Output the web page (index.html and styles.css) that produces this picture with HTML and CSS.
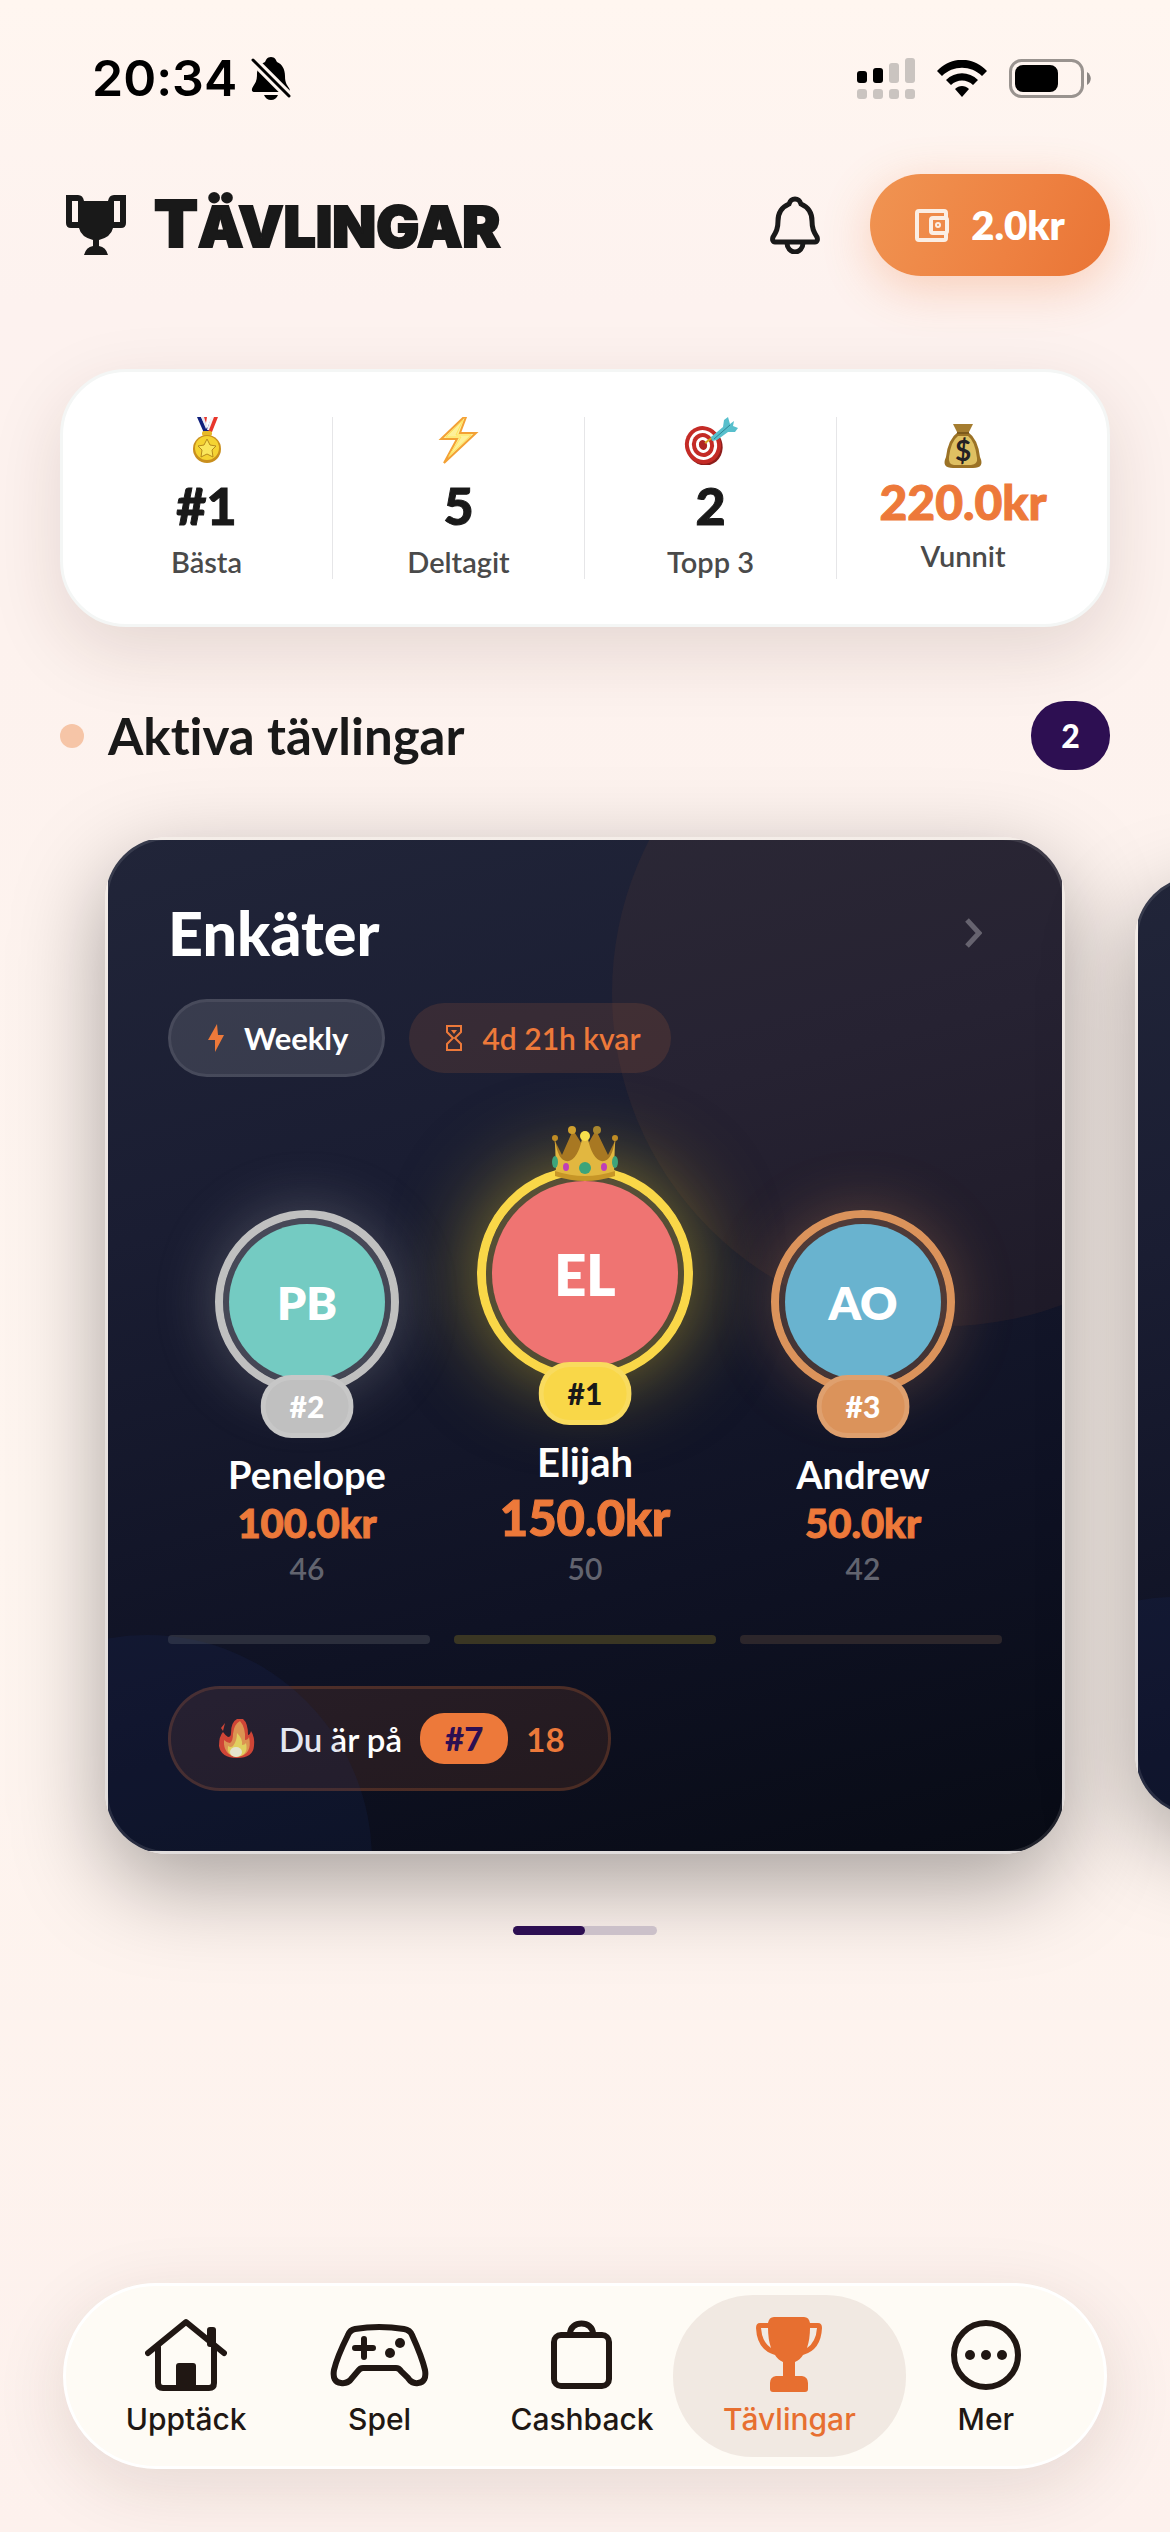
FILE: index.html
```html
<!DOCTYPE html>
<html lang="sv">
<head>
    <meta charset="utf-8">
    <meta name="viewport" content="width=device-width">
    <title>Tävlingar</title>
    <link rel="stylesheet" href="styles.css">
</head>
<body>
    <div class="statusbar">
        <div class="status-left">
            <span class="clock">20:34</span>
            <svg width="40" height="43" viewBox="0 0 40 43">
                <path d="M20 0C24 0 25 3 26 5C31 7 34 12 34 19C34 26 36 28 38 31C40 35 38 35 36 35H4C-1 35 1 31 3 28C6 24 6 20 6 16C7 9 10 7 14 5C15 3 16 0 20 0Z"/>
                <path d="M13 38H27C26 41 23 43 20 43S14 41 13 38Z"/>
                <path class="slash-gap" d="M2 3L38 39"/>
                <path class="slash" d="M2 3L38 39"/>
            </svg>
        </div>
        <div class="status-right">
            <svg width="58" height="41" viewBox="0 0 58 41">
                <rect x="0" y="13" width="10" height="12" rx="3"/>
                <rect x="16" y="10" width="10" height="15" rx="3"/>
                <g class="dim">
                    <rect x="32" y="5" width="10" height="20" rx="3"/>
                    <rect x="48" y="0" width="10" height="25" rx="3"/>
                    <rect x="0" y="31" width="10" height="10" rx="3"/>
                    <rect x="16" y="31" width="10" height="10" rx="3"/>
                    <rect x="32" y="31" width="10" height="10" rx="3"/>
                    <rect x="48" y="31" width="10" height="10" rx="3"/>
                </g>
            </svg>
            <svg width="50" height="37" viewBox="0 0 50 37">
                <path d="M0 11C14 -4 36 -4 50 11L45 16C34 5 16 5 5 16Z"/>
                <path d="M9 20C18 11 32 11 41 20L36 25C30 19 20 19 14 25Z"/>
                <path d="M18 29C22 25 28 25 32 29L25 37Z"/>
            </svg>
            <svg width="82" height="39" viewBox="0 0 82 39">
                <rect class="battery-shell" x="1.5" y="1.5" width="72" height="36" rx="11"/>
                <rect x="6" y="6" width="43" height="27" rx="8"/>
                <path class="battery-tip" d="M78 13C83 16 83 23 78 26Z"/>
            </svg>
        </div>
    </div>

    <header class="header">
        <svg class="header-trophy" width="60" height="60" viewBox="0 0 60 60">
            <path fill-rule="evenodd" d="M0 0H12Q17 0 18 6H42Q43 0 48 0H60V28Q60 33 55 33H47Q45 42 33 45V51Q40 52 42 60H18Q20 52 27 51V45Q15 42 13 33H5Q0 33 0 28ZM6 6V27H12V6ZM48 6V27H54V6Z"/>
        </svg>
        <h1>TÄVLINGAR</h1>
        <button class="bell" type="button" aria-label="Notiser">
            <svg width="50" height="58" viewBox="0 0 50 58">
                <path d="M25 3C29 3 30 5 31 8C38 11 42 16 42 25C42 33 44 36 47 41C48 44 47 46 45 46H5C3 46 2 44 3 41C6 36 8 33 8 25C8 16 12 11 19 8C20 5 21 3 25 3Z"/>
                <path d="M17 47A8 9 0 0 0 33 47"/>
            </svg>
        </button>
        <button class="wallet" type="button">
            <svg width="34" height="33" viewBox="0 0 34 33">
                <path d="M31 8V4Q31 2 29 2H4Q2 2 2 4V29Q2 31 4 31H29Q31 31 31 29V24"/>
                <rect x="16" y="9" width="16" height="15" rx="2"/>
                <circle cx="23" cy="16" r="1"/>
            </svg>
            2.0kr
        </button>
    </header>

    <main>
        <section class="stats">
            <div class="stat">
                <svg class="emoji" width="50" height="48" viewBox="0 0 50 48">
                    <path fill="#10207c" d="M15 0H19L25 12L29 2V0H33L28 16H22Z"/>
                    <path fill="#e8e8f0" d="M19 0H22L25 8L24 12Z"/>
                    <path fill="#e8362c" d="M22 0H25L24 6ZM31 0H36L30 15H26Z"/>
                    <path fill="#f5f5f8" d="M29 0H32L27 13L25 13Z"/>
                    <rect x="20" y="14" width="10" height="5" rx="2" fill="#e7b928"/>
                    <circle cx="25" cy="32" r="14" fill="#c98f1d"/>
                    <circle cx="25" cy="31" r="12" fill="#f5d332"/>
                    <path fill="#fae65c" stroke="#b78a1c" d="M25 22L28 28L34 29L30 33L31 40L25 37L19 40L20 33L16 29L22 28Z"/>
                </svg>
                <span class="stat-value">#1</span>
                <span class="stat-label">Bästa</span>
            </div>
            <div class="stat">
                <svg class="emoji" width="50" height="48" viewBox="0 0 50 48">
                    <path fill="#fdf09a" stroke="#f3a135" stroke-width="2" d="M30 0L7 22H23L10 46L42 16H26L32 0Z"/>
                    <path fill="none" stroke="#ffe45c" d="M29 3L12 20H27L15 39L37 18H22Z"/>
                </svg>
                <span class="stat-value">5</span>
                <span class="stat-label">Deltagit</span>
            </div>
            <div class="stat">
                <svg class="emoji" width="54" height="48" viewBox="0 0 54 48">
                    <g transform="rotate(-18 19 28)">
                        <ellipse cx="20" cy="30" rx="18" ry="19" fill="#8d1d1b"/>
                        <ellipse cx="19" cy="28" rx="18" ry="19" fill="#c42b26"/>
                        <ellipse cx="19" cy="28" rx="14" ry="15" fill="#fff"/>
                        <ellipse cx="19" cy="28" rx="11" ry="12" fill="#c42b26"/>
                        <ellipse cx="19" cy="28" rx="7" ry="8" fill="#fff"/>
                        <ellipse cx="19" cy="28" rx="4" ry="5" fill="#b02522"/>
                    </g>
                    <path stroke="#d8a520" stroke-width="2" d="M21 26L29 20"/>
                    <path fill="#58bfcc" d="M27 20L39 10L40 3L44 0L46 7L50 4L49 9L54 11L51 15L44 15L33 23L28 24Z"/>
                    <path stroke="#2d8594" d="M30 22L46 8"/>
                </svg>
                <span class="stat-value">2</span>
                <span class="stat-label">Topp 3</span>
            </div>
            <div class="stat stat-won">
                <svg class="emoji" width="50" height="46" viewBox="0 2 50 46">
                    <path fill="#a57d30" d="M15 3H35L30 13H20Z"/>
                    <path fill="#9b7226" d="M20 11H30Q40 18 42 36Q47 47 35 47H15Q3 47 8 36Q10 18 20 11Z"/>
                    <path fill="#dfc062" d="M20 15H30Q37 20 39 37Q40 43 33 44H16Q10 43 11 36Q13 20 20 15Z"/>
                    <path stroke="#7d5a1c" stroke-width="2" d="M19 12H31"/>
                    <text x="25" y="40" text-anchor="middle" font-size="28" font-weight="700" fill="#242124">$</text>
                </svg>
                <span class="stat-value">220.0kr</span>
                <span class="stat-label">Vunnit</span>
            </div>
        </section>

        <div class="section-head">
            <span class="dot"></span>
            <h2>Aktiva tävlingar</h2>
            <span class="count">2</span>
        </div>

        <section class="carousel">
            <article class="card">
                <div class="card-body">
                    <div class="card-top">
                        <h3>Enkäter</h3>
                        <button class="chevron" type="button" aria-label="Öppna">
                            <svg width="17" height="30" viewBox="0 0 17 30"><path d="M2 2L14 15L2 28"/></svg>
                        </button>
                    </div>
                    <div class="tags">
                        <span class="tag tag-type">
                            <svg width="16" height="28" viewBox="0 0 16 28"><path fill="#ed793a" d="M9 0L0 16H7V28L16 11H10Z"/></svg>
                            Weekly
                        </span>
                        <span class="tag tag-time">
                            <svg width="16" height="26" viewBox="0 0 16 26">
                                <path fill="none" stroke="#ed793a" stroke-width="2" d="M1 1H15V7L9 13L15 19V25H1V19L7 13L1 7Z"/>
                                <path fill="#ed793a" d="M5 5H11L8 9Z"/>
                            </svg>
                            4d 21h kvar
                        </span>
                    </div>
                    <div class="podium">
                        <div class="place silver">
                            <div class="ring"><div class="avatar">PB</div><span class="rank">#2</span></div>
                            <span class="name">Penelope</span>
                            <span class="amount">100.0kr</span>
                            <span class="score">46</span>
                        </div>
                        <div class="place gold">
                            <div class="ring">
                                <svg class="crown" width="66" height="56" viewBox="0 0 66 56">
                                    <path fill="#a87822" d="M2 14L8 48H58L64 14L56 30L44 5L33 24L21 5L10 30Z"/>
                                    <circle cx="20" cy="5" r="4" fill="#d0a02e"/>
                                    <circle cx="45" cy="5" r="4" fill="#a8862e"/>
                                    <circle cx="3" cy="13" r="3" fill="#c08c24"/>
                                    <circle cx="63" cy="13" r="3" fill="#c08c24"/>
                                    <path fill="#e2b740" d="M3 14Q6 38 17 36Q26 33 30 14H36Q40 33 49 36Q60 38 63 14L62 50Q33 60 4 50Z"/>
                                    <path fill="#c79627" d="M3 46Q33 56 63 46V51Q33 61 3 51Z"/>
                                    <circle cx="33" cy="11" r="5" fill="#f7df4c"/>
                                    <ellipse cx="33" cy="43" rx="6" ry="6" fill="#3da47a"/>
                                    <ellipse cx="14" cy="42" rx="3" ry="4" fill="#bf3fb5"/>
                                    <ellipse cx="52" cy="42" rx="3" ry="4" fill="#bf3fb5"/>
                                    <ellipse cx="3" cy="37" rx="3" ry="6" fill="#3da47a"/>
                                    <ellipse cx="63" cy="37" rx="3" ry="6" fill="#3da47a"/>
                                </svg>
                                <div class="avatar">EL</div><span class="rank">#1</span>
                            </div>
                            <span class="name">Elijah</span>
                            <span class="amount">150.0kr</span>
                            <span class="score">50</span>
                        </div>
                        <div class="place bronze">
                            <div class="ring"><div class="avatar">AO</div><span class="rank">#3</span></div>
                            <span class="name">Andrew</span>
                            <span class="amount">50.0kr</span>
                            <span class="score">42</span>
                        </div>
                    </div>
                    <div class="bars">
                        <span class="bar bar-silver"></span>
                        <span class="bar bar-gold"></span>
                        <span class="bar bar-bronze"></span>
                    </div>
                    <div class="you">
                        <svg width="36" height="40" viewBox="0 0 36 40">
                            <path fill="#e8472c" d="M12 14Q12 3 18 0H24Q29 4 29 16Q31 16 32 12Q36 18 35 27Q34 39 18 39Q2 39 0 27Q0 17 4 13Q6 16 9 18Q12 18 12 14ZM2 9L6 4L4 12Z"/>
                            <path fill="#f6a04c" d="M14 15Q15 5 21 2Q27 9 26 21Q29 21 30 18Q34 36 18 38Q4 36 5 21Q8 24 11 24Q14 22 14 15Z"/>
                            <path fill="#fbe45a" d="M18 14Q24 20 23 26Q26 26 27 24Q30 37 17 38Q7 36 9 27Q12 29 14 27Q18 22 18 14Z"/>
                            <ellipse cx="17" cy="33" rx="6" ry="5" fill="#fffbd8"/>
                        </svg>
                        <span class="you-text">Du är på</span>
                        <span class="you-rank">#7</span>
                        <span class="you-score">18</span>
                    </div>
                </div>
            </article>
            <article class="card card-next" aria-hidden="true">
                <div class="card-body"></div>
            </article>
        </section>

        <div class="pager"><span class="pager-thumb"></span></div>
    </main>

    <nav class="tabbar">
        <a href="#upptack" class="tab">
            <svg width="82" height="75" viewBox="0 0 82 75">
                <path d="M3 36L41 5L79 36" stroke-linejoin="round"/>
                <path d="M13 30V66Q13 71 18 71H64Q69 71 69 66V30"/>
                <rect class="solid" x="31" y="46" width="20" height="25" rx="3"/>
                <rect class="solid" x="62" y="10" width="9" height="20" rx="3"/>
            </svg>
            Upptäck
        </a>
        <a href="#spel" class="tab">
            <svg width="99" height="75" viewBox="0 -7 99 75">
                <path d="M18 11Q20 6 25 5Q49 1 74 5Q80 6 82 11Q92 33 95 46Q97 58 88 59Q82 60 78 54L71 47Q69 44 66 44H33Q30 44 28 47L22 54Q18 60 11 59Q2 58 4 46Q7 33 18 11Z"/>
                <path d="M25 24H43M34 15V33"/>
                <circle class="solid" cx="70" cy="19" r="5"/>
                <circle class="solid" cx="60" cy="29" r="5"/>
            </svg>
            Spel
        </a>
        <a href="#cashback" class="tab">
            <svg width="61" height="75" viewBox="0 -3 61 75">
                <rect x="3" y="15" width="55" height="51" rx="7"/>
                <path d="M19 14C19 0 42 0 42 14"/>
            </svg>
            Cashback
        </a>
        <a href="#tavlingar" class="tab active">
            <svg width="66" height="75" viewBox="0 0 66 75">
                <path class="solid" fill-rule="evenodd" d="M18 0H48Q53 0 54 6H62Q66 6 66 11Q65 33 47 38Q44 43 39 45V59H46Q52 60 52 66V72Q52 75 49 75H17Q14 75 14 72V66Q14 60 20 59H27V45Q22 43 19 38Q1 33 0 11Q0 6 4 6H12Q13 0 18 0ZM5 11Q6 25 15 31Q12 22 12 11ZM54 11Q54 22 51 31Q60 25 61 11Z"/>
            </svg>
            Tävlingar
        </a>
        <a href="#mer" class="tab">
            <svg width="70" height="75" viewBox="0 -3 70 75">
                <circle cx="35" cy="35" r="32"/>
                <circle class="solid" cx="19" cy="35" r="5"/>
                <circle class="solid" cx="35" cy="35" r="5"/>
                <circle class="solid" cx="51" cy="35" r="5"/>
            </svg>
            Mer
        </a>
    </nav>
</body>
</html>
```

FILE: styles.css
```css
* {
    box-sizing: border-box;
}
body {
    margin: 0;
    min-height: 100vh;
    display: flex;
    flex-direction: column;
    background: linear-gradient(#fff6f0, #fdf2ef 12%, #fdf2ee 25%, #fef5ef 60%, #fdf1ed);
    color: #191919;
    font-family: Lato, "Open Sans", sans-serif;
    font-variant-ligatures: none;
}
h1, h2, h3 {
    margin: 0;
}
button {
    border: none;
    background: none;
    padding: 0;
    font-family: inherit;
    cursor: pointer;
}
svg {
    display: block;
    flex: none;
}

/* status bar */
.statusbar {
    display: flex;
    justify-content: space-between;
    align-items: center;
    height: 156px;
    padding: 0 79px 0 92px;
    color: #000;
}
.status-left {
    display: flex;
    align-items: center;
    gap: 14px;
}
.status-right {
    display: flex;
    align-items: center;
    gap: 22px;
}
.clock {
    font-family: Inter, sans-serif;
    font-size: 50px;
    font-weight: 600;
}
.slash-gap {
    stroke: #fef5ef;
    stroke-width: 9px;
}
.slash {
    stroke: #000;
    stroke-width: 3px;
    stroke-linecap: round;
}
.dim {
    fill: #cac4c0;
}
.battery-shell {
    fill: none;
    stroke: #99938f;
    stroke-width: 3px;
}
.battery-tip {
    fill: #8a8582;
}

/* header */
.header {
    display: flex;
    align-items: center;
    margin: 18px 60px 0;
    height: 102px;
}
.header-trophy {
    margin-left: 6px;
    fill: #191919;
}
h1 {
    margin-left: 28px;
    font-family: Inter, sans-serif;
    font-size: 57px;
    font-weight: 900;
    line-height: 66px;
    -webkit-text-stroke: 2px #191919;
}
h1::first-letter {
    font-size: 64px;
}
.bell {
    margin-left: auto;
    margin-right: 50px;
}
.bell svg {
    fill: none;
    stroke: #191919;
    stroke-width: 5px;
}
.wallet {
    display: flex;
    align-items: center;
    justify-content: center;
    gap: 22px;
    width: 240px;
    height: 102px;
    border-radius: 51px;
    background: linear-gradient(115deg, #f09452, #ee8141 60%, #e97435);
    box-shadow: 0 12px 48px rgba(237, 121, 58, 0.3);
    color: #fff;
    font-size: 40px;
    font-weight: 800;
}
.wallet svg {
    fill: none;
    stroke: #fbeee4;
    stroke-width: 4px;
}

/* stats */
.stats {
    display: grid;
    grid-template-columns: repeat(4, 1fr);
    align-items: center;
    margin: 93px 60px 0;
    padding: 45px 18px;
    border: 3px solid #f4f6f5;
    border-radius: 66px;
    background: #fff;
    box-shadow: 0 24px 72px rgba(60, 30, 20, 0.13);
}
.stat {
    display: flex;
    flex-direction: column;
    align-items: center;
    height: 162px;
    border-right: 1px solid #e6e6e8;
}
.stat-value {
    margin-top: 10px;
    font-size: 52px;
    font-weight: 900;
    line-height: 60px;
    -webkit-text-stroke: 1px;
}
.stat-label {
    margin-top: 10px;
    color: #4a4a4a;
    font-size: 29px;
    font-weight: 600;
    line-height: 34px;
}
.stat-won {
    height: 150px;
    border-right: none;
}
.stat-won .stat-value {
    margin-top: 6px;
    color: #ed793a;
    font-size: 48px;
    line-height: 54px;
}

/* section heading */
.section-head {
    display: flex;
    align-items: center;
    height: 69px;
    margin: 74px 60px 67px;
}
.dot {
    width: 24px;
    height: 24px;
    margin-right: 24px;
    border-radius: 50%;
    background: #f6c5a7;
}
h2 {
    font-size: 51px;
    font-weight: 700;
}
.count {
    margin-left: auto;
    width: 79px;
    border-radius: 34px;
    background: #2d0f52;
    color: #fff;
    font-size: 32px;
    font-weight: 900;
    line-height: 69px;
    text-align: center;
}

/* competition cards */
.carousel {
    display: flex;
    align-items: center;
    gap: 70px;
    padding: 0 105px;
    overflow-x: clip;
}
.card {
    position: relative;
    flex: 0 0 100%;
    padding: 3px;
    border-radius: 63px;
    overflow: hidden;
    background: linear-gradient(#f3ebe6, #e4ddda 60%, #dedad9);
    box-shadow: 0 30px 90px rgba(0, 0, 0, 0.34);
}
.card::after {
    content: "";
    position: absolute;
    inset: 0;
    border: 3px solid rgba(255, 255, 255, 0.1);
    border-radius: 63px;
    pointer-events: none;
}
.card-body {
    position: relative;
    overflow: hidden;
    height: 100%;
    padding: 60px;
    background: linear-gradient(165deg, #212539, #1a1d32 32%, #0f1224 70%, #080b15);
    color: #fff;
}
.card-body > * {
    position: relative;
}
.card-body::before {
    content: "";
    position: absolute;
    top: -180px;
    right: -216px;
    width: 666px;
    height: 666px;
    border-radius: 50%;
    background: rgba(237, 121, 58, 0.06);
}
.card-body::after {
    content: "";
    position: absolute;
    bottom: -234px;
    left: -186px;
    width: 450px;
    height: 450px;
    border-radius: 50%;
    background: rgba(35, 60, 130, 0.12);
}
.card-next {
    height: 940px;
}
.card-top {
    display: flex;
    align-items: center;
    justify-content: space-between;
    height: 66px;
}
h3 {
    font-size: 61px;
    font-weight: 900;
    line-height: 66px;
}
.chevron {
    margin-right: 20px;
}
.chevron svg {
    fill: none;
    stroke: #66636f;
    stroke-width: 5px;
}
.tags {
    display: flex;
    align-items: center;
    gap: 24px;
    margin-top: 33px;
}
.tag {
    display: flex;
    align-items: center;
    font-size: 31px;
    font-weight: 700;
}
.tag-type {
    gap: 20px;
    height: 78px;
    padding: 0 34px 0 37px;
    border: 3px solid rgba(255, 255, 255, 0.08);
    border-radius: 39px;
    background: rgba(255, 255, 255, 0.12);
}
.tag-time {
    gap: 20px;
    height: 70px;
    padding: 0 31px 0 37px;
    border-radius: 35px;
    background: rgba(237, 121, 58, 0.13);
    color: #ed793a;
    font-size: 30px;
    font-weight: 600;
}

/* podium */
.podium {
    display: grid;
    grid-template-columns: repeat(3, 1fr);
    align-items: end;
    margin-top: 89px;
}
.place {
    display: flex;
    flex-direction: column;
    align-items: center;
}
.ring {
    position: relative;
    margin-bottom: 56px;
    padding: 6px;
    border: 8px solid;
    border-radius: 50%;
    background-clip: padding-box;
}
.avatar {
    display: flex;
    align-items: center;
    justify-content: center;
    width: 156px;
    height: 156px;
    border-radius: 50%;
    font-size: 46px;
    font-weight: 800;
}
.rank {
    position: absolute;
    left: 50%;
    bottom: -52px;
    transform: translateX(-50%);
    padding: 0 24px;
    border: 5px solid rgba(255, 255, 255, 0.12);
    border-radius: 31px;
    font-size: 30px;
    font-weight: 900;
    line-height: 53px;
}
.silver .ring {
    border-color: #c0c0c0;
    background-color: rgba(192, 192, 192, 0.28);
    box-shadow: 0 0 60px rgba(192, 192, 192, 0.3);
}
.silver .avatar {
    background: #74cbc2;
}
.silver .rank {
    background: #c0c0c0;
}
.gold .ring {
    border: 9px solid #f9d748;
    background-color: rgba(249, 215, 72, 0.28);
    box-shadow: 0 0 84px rgba(249, 215, 40, 0.5);
}
.gold .avatar {
    width: 186px;
    height: 186px;
    background: #ef7472;
    font-size: 56px;
}
.gold .rank {
    background: #f9d748;
    color: #191919;
}
.bronze .ring {
    border-color: #db935b;
    background-color: rgba(219, 147, 91, 0.25);
    box-shadow: 0 0 60px rgba(219, 147, 91, 0.3);
}
.bronze .avatar {
    background: #69b3cf;
}
.bronze .rank {
    background: #db935b;
}
.crown {
    position: absolute;
    top: -50px;
    left: 66px;
}
.name {
    font-size: 38px;
    font-weight: 700;
    line-height: 48px;
}
.amount {
    color: #ed793a;
    font-size: 40px;
    font-weight: 900;
    line-height: 50px;
    -webkit-text-stroke: 1px;
}
.gold .name {
    font-size: 40px;
}
.gold .amount {
    font-size: 49px;
    line-height: 62px;
}
.score {
    color: #62646f;
    font-size: 30px;
    font-weight: 600;
    line-height: 40px;
}
.bars {
    display: flex;
    gap: 24px;
    margin-top: 47px;
}
.bar {
    flex: 1;
    height: 9px;
    border-radius: 4px;
}
.bar-silver {
    background: #2b2e3c;
}
.bar-gold {
    background: #3a3623;
}
.bar-bronze {
    background: #2c262b;
}
.you {
    display: inline-flex;
    align-items: center;
    margin-top: 42px;
    height: 105px;
    padding: 0 43px 0 48px;
    border: 3px solid rgba(237, 121, 58, 0.2);
    border-radius: 52px;
    background: rgba(237, 121, 58, 0.11);
    font-size: 33px;
}
.you-text {
    margin: 0 18px 0 24px;
    font-weight: 600;
}
.you-rank {
    padding: 0 25px;
    border-radius: 24px;
    background: #ed793a;
    color: #2d0f52;
    font-weight: 900;
    line-height: 51px;
}
.you-score {
    margin-left: 18px;
    color: #ed793a;
    font-weight: 700;
}

/* pager */
.pager {
    width: 144px;
    height: 9px;
    margin: 72px auto 0;
    border-radius: 5px;
    background: #cbc0c9;
    position: relative;
}
.pager-thumb {
    display: block;
    width: 50%;
    height: 100%;
    border-radius: 5px;
    background: #2d0f52;
}

/* tab bar */
.tabbar {
    display: grid;
    grid-template-columns: 164fr 222fr 182fr 232fr 160fr;
    margin: auto 63px 63px;
    padding: 9px 38px;
    border: 3px solid #fff;
    border-radius: 93px;
    background: #fefbf5;
    box-shadow: 0 18px 72px rgba(60, 30, 20, 0.12);
}
.tab {
    display: flex;
    flex-direction: column;
    align-items: center;
    gap: 9px;
    height: 162px;
    padding-top: 22px;
    border-radius: 80px;
    color: #201713;
    font-family: Inter, sans-serif;
    font-size: 30px;
    font-weight: 500;
    line-height: 36px;
    text-decoration: none;
}
.tab svg {
    fill: none;
    stroke: #201713;
    stroke-width: 6px;
    stroke-linecap: round;
}
.tab .solid {
    fill: #201713;
    stroke: none;
}
.active {
    background: #f1e9e2;
    color: #e76f30;
}
.active .solid {
    fill: #e76f30;
}
```
